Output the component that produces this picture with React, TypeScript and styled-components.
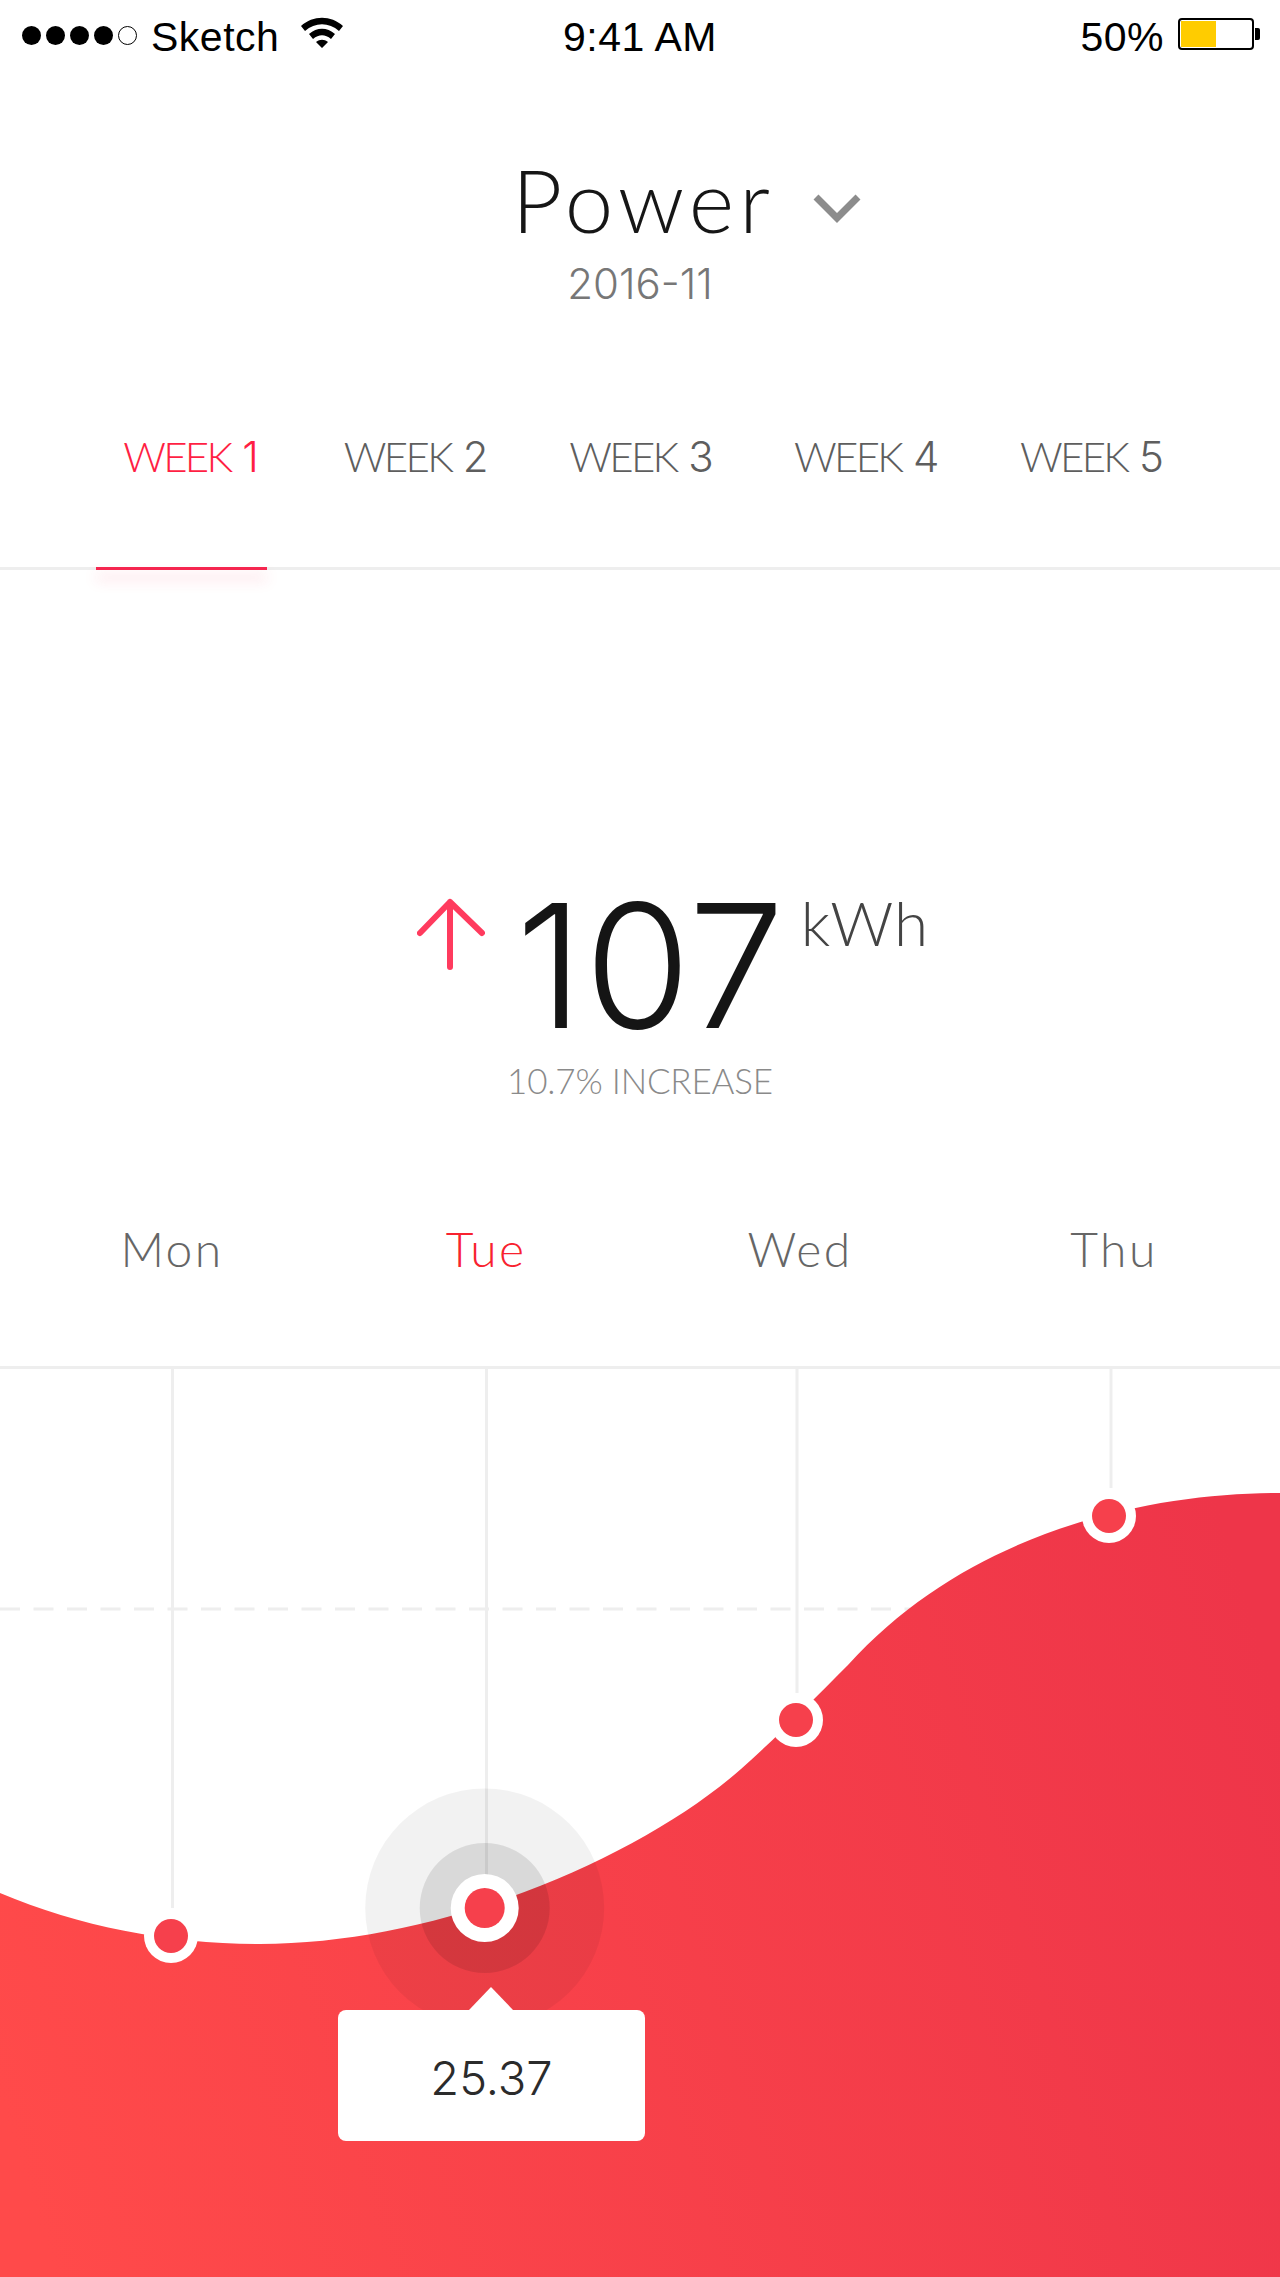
import React from 'react';
import styled, { createGlobalStyle } from 'styled-components';

const GlobalStyle = createGlobalStyle`
  html, body {
    margin: 0;
    padding: 0;
    background: #fff;
  }
`;

const Page = styled.div`
  width: 1280px;
  height: 2277px;
  overflow: hidden;
  background: #fff;
  font-family: 'Lato', 'Liberation Sans', sans-serif;
`;

const StatusBar = styled.div`
  height: 70px;
  padding: 4px 19px 0 22px;
  box-sizing: border-box;
  display: grid;
  grid-template-columns: 1fr auto 1fr;
  align-items: center;
  font-family: 'Liberation Sans', Arial, sans-serif;
  font-size: 41px;
  letter-spacing: 0.5px;
  color: #000;
`;

const StatusLeft = styled.div`
  display: flex;
  align-items: center;
`;

const StatusRight = styled.div`
  display: flex;
  align-items: center;
  justify-content: flex-end;
`;

const Clock = styled.div`
  margin-left: -3px;
`;

const Signal = styled.div`
  display: flex;
  gap: 5px;
  margin: -4px 14px 0 0;
`;

const SignalDot = styled.i<{ $empty?: boolean }>`
  width: 19px;
  height: 19px;
  box-sizing: border-box;
  border-radius: 50%;
  background: ${({ $empty }) => ($empty ? 'transparent' : '#000')};
  border: ${({ $empty }) => ($empty ? '1.5px solid #000' : 'none')};
`;

const WifiIcon = styled.svg`
  width: 44px;
  height: 31px;
  margin: -9px 0 0 21px;
`;

const Battery = styled.div`
  position: relative;
  width: 76px;
  height: 32px;
  margin: -6px 7px 0 14px;
  padding: 1px;
  box-sizing: border-box;
  border: 2px solid #000;
  border-radius: 4px;
  &:after {
    content: '';
    position: absolute;
    right: -8px;
    top: 8px;
    width: 5px;
    height: 12px;
    background: #000;
    border-radius: 0 2px 2px 0;
  }
`;

const BatteryLevel = styled.div`
  width: 35px;
  height: 100%;
  background: #ffcc00;
`;

const TitleBlock = styled.div`
  height: 310px;
  padding-top: 85px;
  box-sizing: border-box;
`;

const TitleRow = styled.div`
  display: flex;
  justify-content: center;
  align-items: center;
  margin-left: 93px;
  height: 90px;
`;

const Title = styled.h1`
  margin: 0;
  font-size: 87px;
  font-weight: 300;
  letter-spacing: 5px;
  color: #161616;
  line-height: 90px;
`;

const Chevron = styled.svg`
  width: 48px;
  height: 30px;
  margin: 18px 0 0 38px;
`;

const DateLabel = styled.div`
  margin-top: 14px;
  text-align: center;
  font-family: 'Inter', 'Liberation Sans', sans-serif;
  font-size: 42px;
  font-weight: 300;
  color: #777;
  line-height: 50px;
`;

const Tabs = styled.div`
  display: grid;
  grid-template-columns: repeat(5, 225.25px);
  padding-left: 77px;
  height: 190px;
  box-sizing: border-box;
  border-bottom: 3px solid #eee;
`;

const Tab = styled.div<{ $active?: boolean }>`
  position: relative;
  padding-top: 51px;
  text-align: center;
  font-size: 42px;
  font-weight: 300;
  line-height: 50px;
  letter-spacing: -2.7px;
  word-spacing: 3px;
  color: ${({ $active }) => ($active ? '#ff1f44' : '#5e5e5e')};
  ${({ $active }) =>
    $active &&
    `&:after {
      content: '';
      position: absolute;
      left: 19px;
      bottom: -3px;
      width: 171px;
      height: 3px;
      background: #f5264f;
      box-shadow: 0 9px 14px rgba(245, 38, 79, 0.28);
    }`}
`;

const TabNumber = styled.span`
  font-family: 'Inter', 'Liberation Sans', sans-serif;
`;

const Summary = styled.div`
  height: 796px;
  box-sizing: border-box;
  padding-top: 321px;
`;

const Hero = styled.div`
  display: flex;
  justify-content: center;
  align-items: flex-start;
  height: 139px;
  margin-left: 66px;
`;

const UpArrow = styled.svg`
  width: 68px;
  height: 72px;
  margin: 7px 31px 0 0;
`;

const Value = styled.div`
  padding-top: 9px;
  font-family: 'Inter', 'Liberation Sans', sans-serif;
  font-size: 172px;
  font-weight: 300;
  line-height: 130px;
  letter-spacing: 1px;
  color: #151515;
`;

const Unit = styled.div`
  margin: 0 0 0 15px;
  font-size: 62px;
  font-weight: 300;
  line-height: 62px;
  letter-spacing: 1px;
  color: #444;
`;

const Increase = styled.div`
  margin-top: 30px;
  text-align: center;
  font-size: 35px;
  font-weight: 300;
  line-height: 40px;
  letter-spacing: -0.2px;
  color: #8a8a8a;
`;

const Days = styled.div`
  display: grid;
  grid-template-columns: repeat(4, 314px);
  margin-top: 121px;
  padding-left: 15px;
`;

const Day = styled.div<{ $active?: boolean }>`
  text-align: center;
  font-size: 48px;
  font-weight: 300;
  line-height: 56px;
  letter-spacing: 2.4px;
  color: ${({ $active }) => ($active ? '#f8222f' : '#666')};
`;

const ChartArea = styled.div`
  position: relative;
  height: 911px;
  border-top: 3px solid #eee;
  box-sizing: border-box;
`;

const ChartSvg = styled.svg`
  display: block;
  width: 1280px;
  height: 908px;
`;

const Tooltip = styled.div`
  position: absolute;
  left: 338px;
  top: 641px;
  width: 307px;
  height: 131px;
  padding-top: 4px;
  box-sizing: border-box;
  display: flex;
  align-items: center;
  justify-content: center;
  background: #fff;
  border-radius: 8px;
  font-family: 'Inter', 'Liberation Sans', sans-serif;
  font-size: 47px;
  font-weight: 300;
  color: #2b2b2b;
  &:before {
    content: '';
    position: absolute;
    left: 131px;
    top: -23px;
    border-left: 22px solid transparent;
    border-right: 22px solid transparent;
    border-bottom: 23px solid #fff;
  }
`;

// page coordinates, the svg viewBox starts at the chart's top
const areaPath =
  'M0 1893C80 1927 170 1944 260 1944C440 1944 640 1858 741 1769' +
  'C775 1739 812 1701 848 1665C970 1530 1150 1493 1280 1493L1280 2277L0 2277Z';

const points = [
  { x: 171, y: 1936, lineX: 172.5, lineEnd: 1908 },
  { x: 796, y: 1720, lineX: 797, lineEnd: 1693 },
  { x: 1109, y: 1516, lineX: 1111, lineEnd: 1488 },
];

export default function App() {
  return (
    <Page>
      <GlobalStyle />
      <StatusBar>
        <StatusLeft>
          <Signal>
            <SignalDot /><SignalDot /><SignalDot /><SignalDot /><SignalDot $empty />
          </Signal>
          Sketch
          <WifiIcon viewBox="0 0 44 31">
            <path d="M1 9C13-2 31-2 43 9l-4 5C29 5 15 5 5 14zM9 17c8-7 18-7 26 0l-4 5c-6-5-12-5-18 0zM16 25c4-3 8-3 12 0l-6 6z" fill="#000" />
          </WifiIcon>
        </StatusLeft>
        <Clock>9:41 AM</Clock>
        <StatusRight>
          50%
          <Battery><BatteryLevel /></Battery>
        </StatusRight>
      </StatusBar>

      <TitleBlock>
        <TitleRow>
          <Title>Power</Title>
          <Chevron viewBox="0 0 48 30">
            <path d="M3 3l21 21L45 3" fill="none" stroke="#8c8c8c" strokeWidth="7" />
          </Chevron>
        </TitleRow>
        <DateLabel>2016-11</DateLabel>
      </TitleBlock>

      <Tabs>
        {[1, 2, 3, 4, 5].map((n) => (
          <Tab key={n} $active={n === 1}>WEEK <TabNumber>{n}</TabNumber></Tab>
        ))}
      </Tabs>

      <Summary>
        <Hero>
          <UpArrow viewBox="0 0 68 72">
            <path d="M33 69V4M3 35L33 4l32 31" fill="none" stroke="#ff3b5e" strokeWidth="6" strokeLinecap="round" strokeLinejoin="round" />
          </UpArrow>
          <Value>107</Value>
          <Unit>kWh</Unit>
        </Hero>
        <Increase>10.7% INCREASE</Increase>
        <Days>
          <Day>Mon</Day>
          <Day $active>Tue</Day>
          <Day>Wed</Day>
          <Day>Thu</Day>
        </Days>
      </Summary>

      <ChartArea>
        <ChartSvg viewBox="0 1369 1280 908">
          <defs>
            <linearGradient id="areaFill" gradientUnits="userSpaceOnUse" x1="0" y1="2100" x2="1280" y2="1700">
              <stop offset="0" stopColor="#ff4a4a" />
              <stop offset="1" stopColor="#ee3549" />
            </linearGradient>
          </defs>
          <line x1="0" y1="1609" x2="910" y2="1609" stroke="#eee" strokeWidth="3" strokeDasharray="20 13.5" />
          {points.map((p) => (
            <line key={p.x} x1={p.lineX} y1="1369" x2={p.lineX} y2={p.lineEnd} stroke="#eee" strokeWidth="3" />
          ))}
          <line x1="486.5" y1="1369" x2="486.5" y2="1880" stroke="#eee" strokeWidth="3" />
          <path d={areaPath} fill="url(#areaFill)" />
          <circle cx="484.7" cy="1908" r="119.5" fill="rgba(0,0,0,0.05)" />
          <circle cx="484.7" cy="1908" r="65" fill="rgba(0,0,0,0.1)" />
          <circle cx="484.7" cy="1908" r="34" fill="#fff" />
          <circle cx="484.7" cy="1908" r="20" fill="#f6404c" />
          {points.map((p) => (
            <g key={p.x}>
              <circle cx={p.x} cy={p.y} r="27" fill="#fff" />
              <circle cx={p.x} cy={p.y} r="17" fill="#f6404c" />
            </g>
          ))}
        </ChartSvg>
        <Tooltip>25.37</Tooltip>
      </ChartArea>
    </Page>
  );
}
